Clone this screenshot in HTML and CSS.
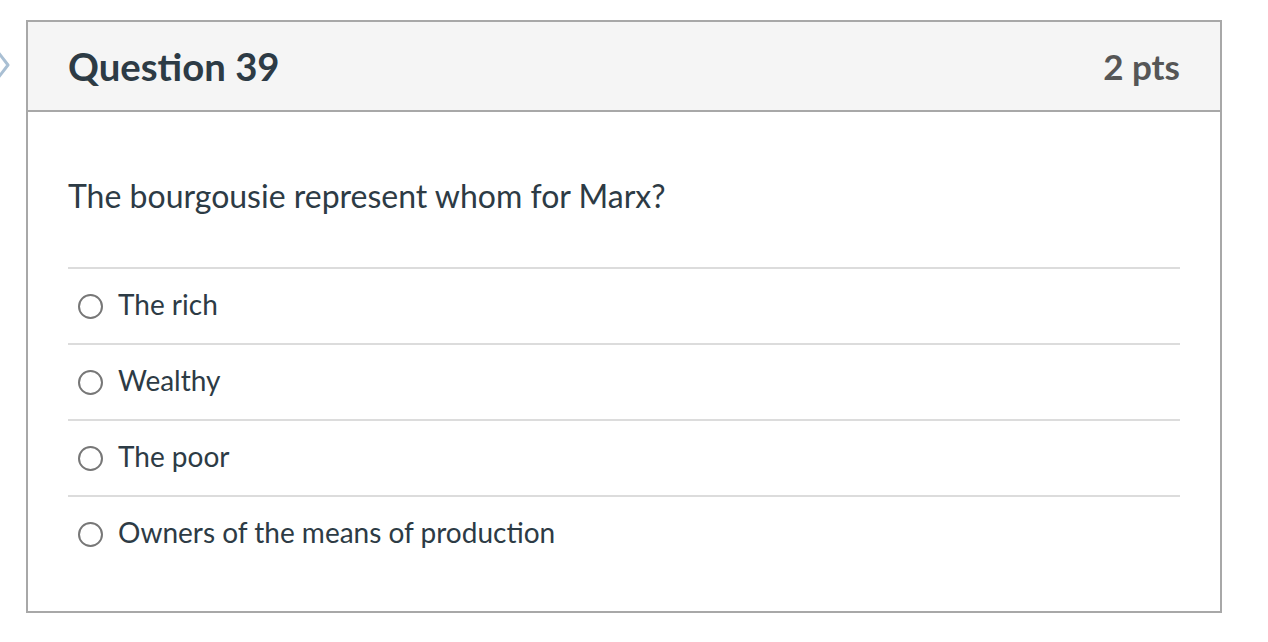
FILE: index.html
```html
<!DOCTYPE html>
<html>
<head>
<meta charset="utf-8">
<link rel="stylesheet" href="styles.css">
</head>
<body>
<div class="page">
  <svg class="nav-arrow" width="12" height="32" viewBox="0 0 12 32">
    <path d="M-2 3 L8 16 L-2 29" fill="none" stroke="#a9bfd3" stroke-width="3" stroke-linejoin="round"/>
  </svg>
  <div class="question">
    <div class="q-header">
      <h2 class="q-title">Question 39</h2>
      <span class="q-points">2 pts</span>
    </div>
    <div class="q-body">
      <p class="q-text">The bourgousie represent whom for Marx?</p>
      <ul class="answers">
        <li class="answer"><span class="radio"></span><span class="label">The rich</span></li>
        <li class="answer"><span class="radio"></span><span class="label">Wealthy</span></li>
        <li class="answer"><span class="radio"></span><span class="label">The poor</span></li>
        <li class="answer"><span class="radio"></span><span class="label">Owners of the means of production</span></li>
      </ul>
    </div>
  </div>
</div>
</body>
</html>
```

FILE: styles.css
```css
* { box-sizing: border-box; }
html, body { margin: 0; padding: 0; background: #fff; }
body { font-family: Lato, "Open Sans", sans-serif; color: #2d3b45; }

.page {
  position: relative;
  padding: 20px 0 0 26px;
}

.nav-arrow {
  position: absolute;
  left: 0;
  top: 49px;
}

.question {
  width: 1196px;
  height: 593px;
  border: 2px solid #a8a8a8;
  display: flex;
  flex-direction: column;
}

.q-header {
  height: 90px;
  background: #f5f5f5;
  border-bottom: 2px solid #a8a8a8;
  display: flex;
  align-items: center;
  justify-content: space-between;
  padding: 0 40px 0 40px;
}

.q-title {
  margin: 0;
  font-size: 38.3px;
  font-weight: 700;
  color: #2d3b45;
}

.q-points {
  font-size: 35px;
  font-weight: 700;
  color: #565656;
}

.q-body {
  padding: 0 40px 0 40px;
}

.q-text {
  margin: 0;
  padding-top: 62px;
  font-size: 32px;
  line-height: 44px;
  height: 155px;
  color: #2d3b45;
}

.answers {
  list-style: none;
  margin: 0;
  padding: 0;
}

.answer {
  display: flex;
  align-items: center;
  height: 76px;
  border-top: 2px solid #dcdcdc;
  padding-left: 10px;
}

.radio {
  width: 25px;
  height: 25px;
  border: 2px solid #777;
  border-radius: 50%;
  flex: none;
}

.label {
  margin-left: 15px;
  margin-bottom: 5px;
  font-size: 28px;
  color: #2d3b45;
}
```
